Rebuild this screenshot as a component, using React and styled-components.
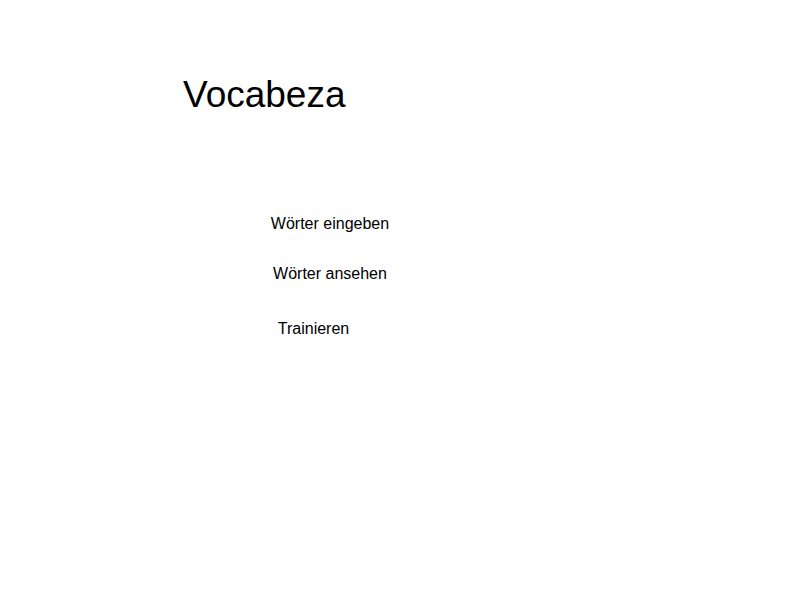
import React from 'react';
import styled, { createGlobalStyle } from 'styled-components';

const GlobalStyle = createGlobalStyle`
  body {
    margin: 0;
    background: #ffffff;
    font-family: "Liberation Sans", Arial, sans-serif;
    color: #000000;
  }
`;

const Page = styled.div`
  width: 800px;
  height: 600px;
  display: flex;
  flex-direction: column;
`;

const Title = styled.h1`
  margin: 0;
  padding: 72px 0 0 183px;
  font-size: 37px;
  font-weight: 400;
  line-height: 46px;
`;

const Menu = styled.nav`
  width: 660px;
  margin-top: 96px;
  display: flex;
  flex-direction: column;
  align-items: center;
`;

const MenuItem = styled.a`
  font-size: 16px;
  line-height: 20px;
  color: #000000;
  text-decoration: none;
  cursor: pointer;
  margin-bottom: ${props => props.gap || 30}px;
  margin-right: ${props => props.shift || 0}px;
`;

const App = () => {
  return (
    <Page>
      <GlobalStyle />
      <Title>Vocabeza</Title>
      <Menu>
        <MenuItem>Wörter eingeben</MenuItem>
        <MenuItem gap={35}>Wörter ansehen</MenuItem>
        <MenuItem shift={33}>Trainieren</MenuItem>
      </Menu>
    </Page>
  );
};

export default App;
